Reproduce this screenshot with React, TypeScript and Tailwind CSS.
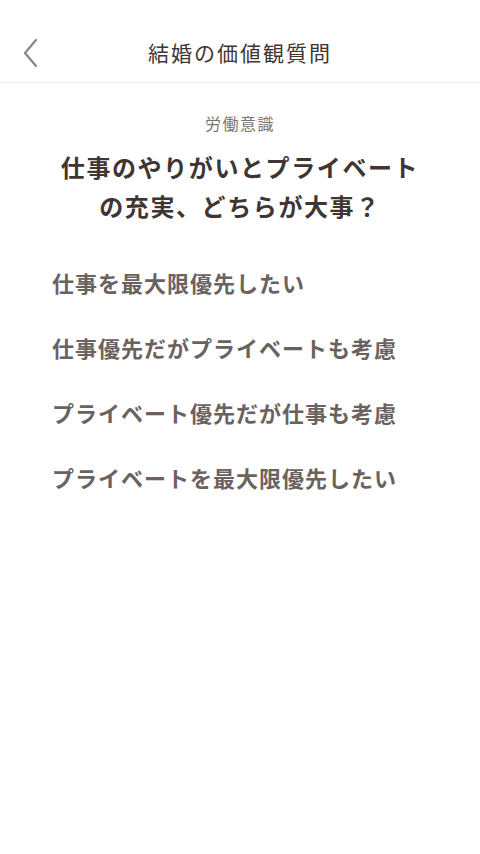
const options = [
  "仕事を最大限優先したい",
  "仕事優先だがプライベートも考慮",
  "プライベート優先だが仕事も考慮",
  "プライベートを最大限優先したい",
];

export default function App() {
  return (
    <main
      className="min-h-screen w-full bg-white text-[#3f3533]"
      style={{ fontFamily: '"Noto Sans CJK JP", "Noto Sans", sans-serif' }}
    >
      <header className="relative flex h-[83px] items-center justify-center border-b border-[#f0eeee] pt-[24px]">
        <button className="absolute left-[14px] top-[37px] text-[#8a8583]">
          <svg width="32" height="32" viewBox="0 0 32 32" fill="none">
            <path d="M22 3 L11 16 L22 29" stroke="currentColor" strokeWidth="2.2" strokeLinecap="round" strokeLinejoin="round" />
          </svg>
        </button>
        <h1 className="text-[21px] tracking-[2px] text-[#3f3533]">結婚の価値観質問</h1>
      </header>

      <section className="flex flex-col items-center pt-[28px]">
        <p className="text-[16px] tracking-[1.5px] text-[#7a7371]">労働意識</p>
        <h2 className="mt-[12px] text-center text-[24px] font-bold leading-[39px] tracking-[1.6px] text-[#3f3533]">
          仕事のやりがいとプライベート
          <br />
          の充実、どちらが大事？
        </h2>
      </section>

      <ul className="mt-[25px] flex flex-col px-[52px]">
        {options.map((o) => (
          <li key={o} className="flex h-[65px] items-center text-[22px] font-bold tracking-[1px] text-[#6b625f]">
            {o}
          </li>
        ))}
      </ul>
    </main>
  );
}
